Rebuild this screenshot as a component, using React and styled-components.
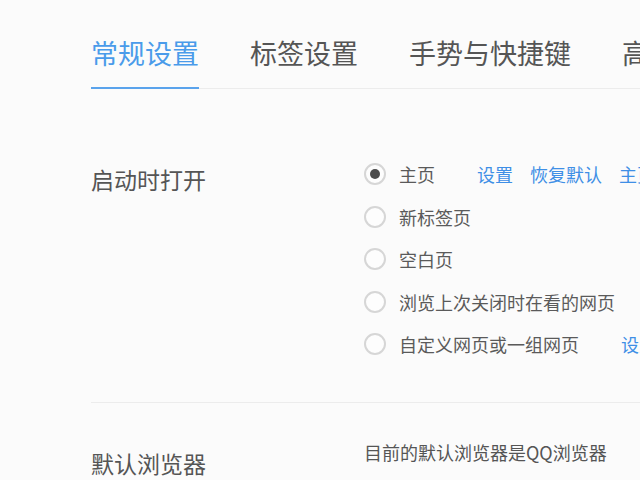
import React from 'react';
import styled, { createGlobalStyle } from 'styled-components';

const GlobalStyle = createGlobalStyle`
  html, body {
    margin: 0;
    padding: 0;
    background-color: #fbfbfb;
    overflow: hidden;
  }
  body {
    font-family: "Noto Sans CJK SC", "Noto Sans", sans-serif;
    color: #555;
  }
`;

const Page = styled.div`
  width: 640px;
  height: 480px;
  overflow: hidden;
  padding-left: 91px;
  box-sizing: border-box;
`;

const TabBar = styled.div`
  display: flex;
  gap: 51px;
  padding-top: 36px;
  border-bottom: 1px solid #ececec;
  white-space: nowrap;
  width: 900px;
`;

const Tab = styled.div`
  font-size: 27px;
  line-height: 34px;
  padding-bottom: 17px;
  margin-bottom: -1px;
  color: ${(props) => (props.active ? '#4a9bea' : '#555')};
  border-bottom: 2px solid ${(props) => (props.active ? '#5aa3ec' : 'transparent')};
`;

const Section = styled.div`
  display: grid;
  grid-template-columns: 273px 1fr;
  padding: ${(props) => props.pad};
  border-bottom: ${(props) => (props.last ? 'none' : '1px solid #ececec')};
  width: 900px;
`;

const Label = styled.div`
  font-size: 23px;
  line-height: 30px;
  margin-top: ${(props) => props.offset}px;
  color: #555;
`;

const Options = styled.div`
  display: flex;
  flex-direction: column;
`;

const Row = styled.div`
  display: flex;
  align-items: center;
  height: 42.5px;
  white-space: nowrap;
`;

const Radio = styled.span`
  width: 22px;
  height: 22px;
  box-sizing: border-box;
  border-radius: 50%;
  border: 2px solid #d6d6d6;
  background: #fdfdfd;
  display: flex;
  align-items: center;
  justify-content: center;
  flex-shrink: 0;
  &::after {
    content: '';
    display: ${(props) => (props.checked ? 'block' : 'none')};
    width: 10px;
    height: 10px;
    border-radius: 50%;
    background: #4c4c4c;
  }
`;

const OptionText = styled.span`
  font-size: 18px;
  line-height: 24px;
  margin-left: 13px;
  color: #5a5a5a;
`;

const Links = styled.span`
  display: flex;
  gap: 17px;
  margin-left: 42px;
`;

const Link = styled.a`
  font-size: 18px;
  line-height: 24px;
  color: #3f8fe6;
  text-decoration: none;
`;

const Info = styled.div`
  font-size: 18px;
  line-height: 24px;
  color: #555;
  white-space: nowrap;
`;

const options = [
  { text: '主页', checked: true, links: ['设置', '恢复默认', '主页'] },
  { text: '新标签页' },
  { text: '空白页' },
  { text: '浏览上次关闭时在看的网页' },
  { text: '自定义网页或一组网页', links: ['设置'] },
];

export default function App() {
  return (
    <Page>
      <GlobalStyle />
      <TabBar>
        <Tab active>常规设置</Tab>
        <Tab>标签设置</Tab>
        <Tab>手势与快捷键</Tab>
        <Tab>高级设置</Tab>
      </TabBar>
      <Section pad="64px 0 36px">
        <Label offset={11}>启动时打开</Label>
        <Options>
          {options.map((o) => (
            <Row key={o.text}>
              <Radio checked={o.checked} />
              <OptionText>{o.text}</OptionText>
              {o.links && (
                <Links>
                  {o.links.map((l) => (
                    <Link key={l} href="#">
                      {l}
                    </Link>
                  ))}
                </Links>
              )}
            </Row>
          ))}
        </Options>
      </Section>
      <Section pad="37px 0 0" last>
        <Label offset={8}>默认浏览器</Label>
        <Info>目前的默认浏览器是QQ浏览器</Info>
      </Section>
    </Page>
  );
}
